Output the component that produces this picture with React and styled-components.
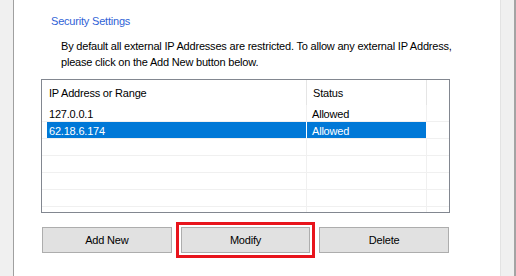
import React from 'react';
import styled, { createGlobalStyle } from 'styled-components';

const GlobalStyle = createGlobalStyle`
  html, body {
    margin: 0;
    padding: 0;
    background: #ffffff;
  }
  body {
    font-family: "Liberation Sans", Arial, sans-serif;
    font-size: 11px;
    letter-spacing: -0.2px;
    color: #000000;
  }
`;

const Window = styled.div`
  display: flex;
  width: 516px;
  height: 276px;
  overflow: hidden;
`;

const LeftGutter = styled.div`
  width: 13px;
  background: #f0f0f0;
  border-right: 1px solid #a0a0a0;
`;

const RightStrip = styled.div`
  width: 13px;
  background: #f0f0f0;
  border-left: 1px solid #e3e3e3;
  border-right: 2px solid #a4a4a4;
`;

const Content = styled.div`
  flex: 1;
  display: flex;
  flex-direction: column;
  background: #ffffff;
  padding-top: 13px;
`;

const Title = styled.div`
  margin-left: 37px;
  line-height: 16px;
  color: #2f62d6;
`;

const Description = styled.p`
  margin: 9px 0 0 47px;
  line-height: 16px;
  width: 420px;
`;

const Table = styled.div`
  margin: 9px 0 0 27px;
  width: 407px;
  height: 132px;
  border: 1px solid #828790;
  overflow: hidden;
`;

const HeaderRow = styled.div`
  display: grid;
  grid-template-columns: 265px 120px 1fr;
  height: 25px;
`;

const HeaderCell = styled.div`
  display: flex;
  align-items: center;
  padding-left: ${p => p.$pad}px;
  border-right: 1px solid #e5e5e5;
`;

const Row = styled.div`
  display: grid;
  grid-template-columns: 265px 120px 1fr;
  height: 16px;
  border-bottom: 1px solid #f0f0f0;
`;

const Cell = styled.div`
  display: flex;
  border-right: 1px solid ${p => (p.$selected ? '#ffffff' : '#f0f0f0')};
  padding-left: ${p => p.$inset}px;
`;

const CellText = styled.div`
  flex: 1;
  display: flex;
  align-items: center;
  padding: 1px 0 0 ${p => p.$pad}px;
  background: ${p => (p.$selected ? '#0078d7' : 'transparent')};
  color: ${p => (p.$selected ? '#ffffff' : '#000000')};
`;

const Buttons = styled.div`
  display: grid;
  grid-template-columns: repeat(3, 1fr);
  gap: 9px;
  margin: 14px 0 0 28px;
  width: 407px;
`;

const Button = styled.button`
  height: 26px;
  background: #e1e1e1;
  border: 1px solid #adadad;
  font: inherit;
  letter-spacing: inherit;
  color: #000000;
  padding: 0;
  outline: ${p => (p.$highlight ? '3px solid #e8141c' : 'none')};
  outline-offset: 2px;
`;

const rows = [
  { ip: '127.0.0.1', status: 'Allowed' },
  { ip: '62.18.6.174', status: 'Allowed', selected: true },
  {}, {}, {}, {}, {},
];

export default function App() {
  return (
    <>
      <GlobalStyle />
      <Window>
        <LeftGutter />
        <Content>
          <Title>Security Settings</Title>
          <Description>
            By default all external IP Addresses are restricted. To allow any external IP Address,
            please click on the Add New button below.
          </Description>
          <Table>
            <HeaderRow>
              <HeaderCell $pad={7}>IP Address or Range</HeaderCell>
              <HeaderCell $pad={6}>Status</HeaderCell>
              <div />
            </HeaderRow>
            {rows.map((r, i) => (
              <Row key={i}>
                <Cell $inset={5} $selected={r.selected}>
                  <CellText $pad={2} $selected={r.selected}>{r.ip}</CellText>
                </Cell>
                <Cell $inset={0} $selected={r.selected}>
                  <CellText $pad={5} $selected={r.selected}>{r.status}</CellText>
                </Cell>
                <div />
              </Row>
            ))}
          </Table>
          <Buttons>
            <Button>Add New</Button>
            <Button $highlight>Modify</Button>
            <Button>Delete</Button>
          </Buttons>
        </Content>
        <RightStrip />
      </Window>
    </>
  );
}
